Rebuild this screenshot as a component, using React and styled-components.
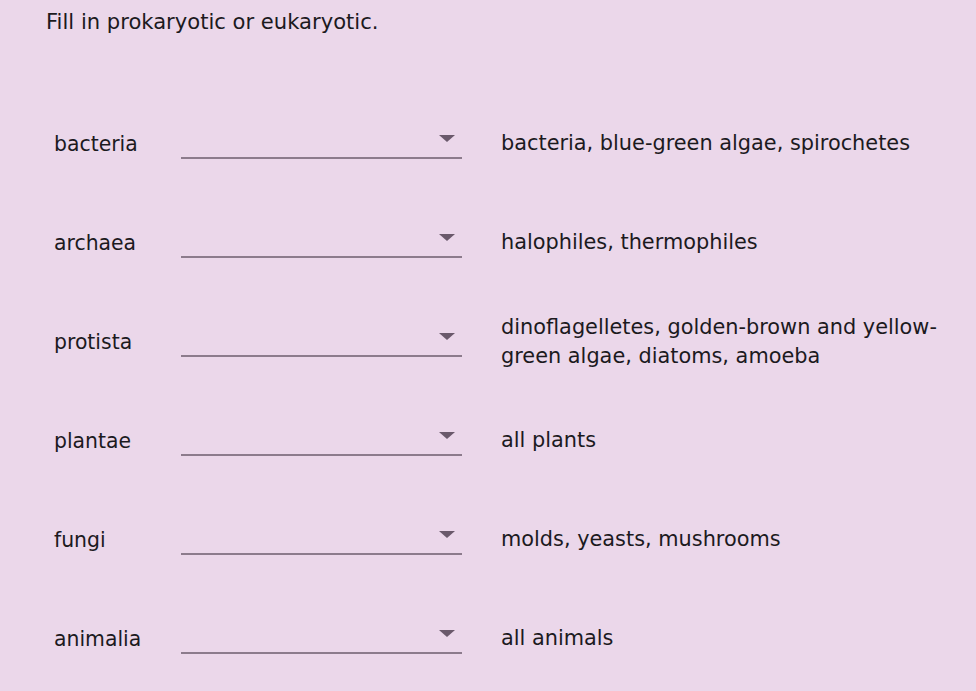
import styled, { createGlobalStyle } from "styled-components";

const Global = createGlobalStyle`
    html, body {
        margin: 0;
        padding: 0;
        background: #ebd7ea;
    }
`

const Page = styled.div`
    width: 976px;
    height: 691px;
    box-sizing: border-box;
    padding: 9px 0 0 46px;
    background: #ebd7ea;
    font-family: "DejaVu Sans", Verdana, sans-serif;
    color: #1c1a1e;
    overflow: hidden;
`

const Title = styled.p`
    margin: 0;
    font-size: 21.1px;
    line-height: 26px;
`

const List = styled.div`
    display: flex;
    flex-direction: column;
    margin-top: 59px;
    padding-left: 8px;
`

const Row = styled.div`
    display: grid;
    grid-template-columns: 127px 281px 1fr;
    align-items: center;
    height: 99px;
`

const Label = styled.span`
    font-size: 20.4px;
`

const Select = styled.div`
    position: relative;
    height: 30px;
    margin-top: -1px;
    border-bottom: 2px solid #8c7b8c;
`

const Arrow = styled.span`
    position: absolute;
    right: 7px;
    top: 8px;
    width: 0;
    height: 0;
    border-left: 8px solid transparent;
    border-right: 8px solid transparent;
    border-top: 7px solid #6a596b;
`

const Desc = styled.span`
    margin-left: 39px;
    font-size: 20.85px;
    line-height: 29px;
`

const rows = [
    ["bacteria", "bacteria, blue-green algae, spirochetes"],
    ["archaea", "halophiles, thermophiles"],
    ["protista", "dinoflagelletes, golden-brown and yellow-green algae, diatoms, amoeba"],
    ["plantae", "all plants"],
    ["fungi", "molds, yeasts, mushrooms"],
    ["animalia", "all animals"],
]

const App = () => {
    return (
        <Page>
            <Global />
            <Title>Fill in prokaryotic or eukaryotic.</Title>
            <List>
                {rows.map(([name, text]) => (
                    <Row key={name}>
                        <Label>{name}</Label>
                        <Select>
                            <Arrow />
                        </Select>
                        <Desc>{text}</Desc>
                    </Row>
                ))}
            </List>
        </Page>
    )
}

export default App
